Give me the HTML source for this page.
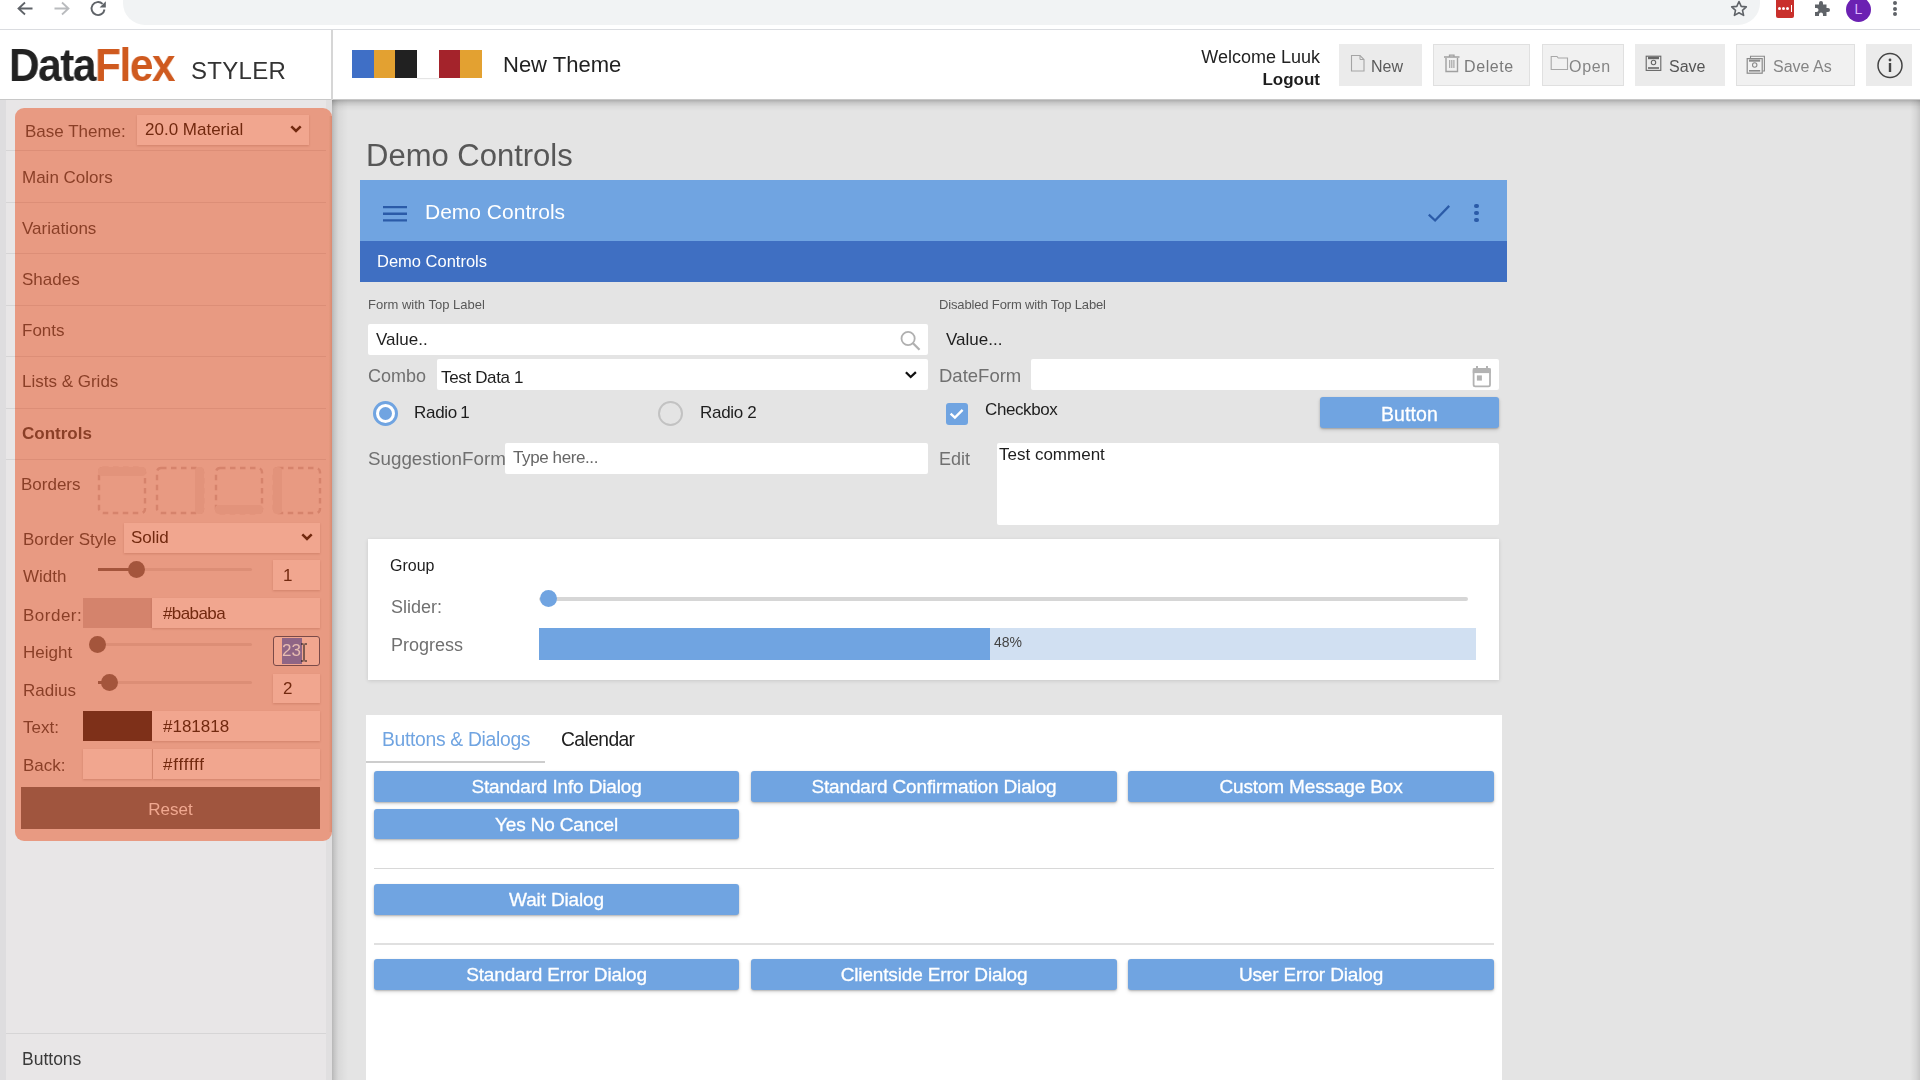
<!DOCTYPE html>
<html><head><meta charset="utf-8">
<style>
*{box-sizing:border-box;margin:0;padding:0}
html,body{width:1920px;height:1080px;overflow:hidden;background:#fff;font-family:"Liberation Sans",sans-serif;position:relative}
.t,.st,.sv,.lbl,.val,.ht,.bt{will-change:transform}
.a{position:absolute}
.t{position:absolute;white-space:nowrap;line-height:1}
#bb{left:0;top:0;width:1920px;height:30px;background:#fff;border-bottom:1px solid #dadce0;overflow:hidden}
#omni{left:123px;top:-20px;width:1637px;height:45px;background:#f1f3f4;border-radius:22px}
#hdr{left:0;top:30px;width:1920px;height:70px;background:#fff;border-bottom:1px solid #c8c8c8}
#hdiv{left:331px;top:30px;width:2px;height:70px;background:#d6d6d6}
#side{left:0;top:100px;width:332px;height:980px;background:#e8e6e7}
#main{left:332px;top:100px;width:1588px;height:980px;background:#e4e4e4}
.sep{position:absolute;left:6px;width:320px;height:1px;background:#d6d5d6}
.osep{position:absolute;left:15px;width:311px;height:1px;background:#dc8e77}
#ov{left:15px;top:108px;width:317px;height:733px;background:#e89a82;border-radius:9px}
.st{position:absolute;font-size:17px;color:#8a3f27;white-space:nowrap;line-height:1}
.sv{position:absolute;font-size:17px;color:#72290f;white-space:nowrap;line-height:1}
.inp{position:absolute;background:#f1a68f;box-shadow:0 1px 2px rgba(120,40,20,.2)}
.thumb{position:absolute;width:17px;height:17px;background:#a4553c;border-radius:50%}
.trk{position:absolute;left:98px;width:154px;height:3px;background:#dc8e76;border-radius:2px}
.btn{position:absolute;background:#70a4e1;border-radius:3px;box-shadow:0 1px 2px rgba(0,0,0,.22),0 2px 4px rgba(0,0,0,.12);height:31px}
.bt{position:absolute;left:0;right:0;top:6px;text-align:center;color:#fff;font-size:19px;line-height:1;letter-spacing:-0.15px;white-space:nowrap;-webkit-text-stroke:0.3px #fff}
.hb{position:absolute;top:44px;height:42px;background:#ebebeb}
.hb.o{background:#f1f1f1;border:1px solid #e0e0e0}
.ht{position:absolute;top:59px;font-size:16px;line-height:1;white-space:nowrap}
.lbl{position:absolute;white-space:nowrap;line-height:1;color:#707070}
.val{position:absolute;white-space:nowrap;line-height:1;color:#1e1e1e;font-size:17px}
.wb{position:absolute;background:#fff;border-radius:2px}
</style></head><body>
<div id="bb" class="a"><div id="omni" class="a"></div></div>
<div id="hdr" class="a"></div>
<div id="hdiv" class="a"></div>
<div id="side" class="a"></div>
<div id="main" class="a"></div>
<div class="a" style="left:332px;top:100px;width:16px;height:980px;background:linear-gradient(90deg,rgba(0,0,0,.2),rgba(0,0,0,.13) 15%,rgba(0,0,0,.05) 40%,rgba(0,0,0,0))"></div>
<div class="a" style="left:332px;top:100px;width:1588px;height:11px;background:linear-gradient(180deg,rgba(0,0,0,.24),rgba(0,0,0,.13) 25%,rgba(0,0,0,.04) 60%,rgba(0,0,0,0))"></div>
<div class="a" style="left:1910px;top:100px;width:10px;height:980px;background:linear-gradient(270deg,rgba(0,0,0,.13),rgba(0,0,0,.06) 40%,rgba(0,0,0,0))"></div>

<svg class="a" style="left:14px;top:0px" width="22" height="18" viewBox="0 0 22 18"><path d="M18.5 8.5H5.5M11 2.5L4.5 8.5L11 14.5" fill="none" stroke="#5f6368" stroke-width="1.8"/></svg>
<svg class="a" style="left:51px;top:0px" width="22" height="18" viewBox="0 0 22 18"><path d="M3.5 8.5H16.5M11 2.5L17.5 8.5L11 14.5" fill="none" stroke="#b9bbbe" stroke-width="1.8"/></svg>
<svg class="a" style="left:88px;top:0px" width="22" height="18" viewBox="0 0 22 18"><path d="M16.5 9.5A6.5 6.5 0 1 1 14.6 3.9" fill="none" stroke="#5f6368" stroke-width="1.9"/><path d="M17.8 1.2V7.4H11.6Z" fill="#5f6368"/></svg>
<svg class="a" style="left:1729px;top:0px" width="20" height="18" viewBox="0 0 20 18"><path d="M10 1.5L12.2 6.4L17.3 6.9L13.5 10.3L14.6 15.4L10 12.8L5.4 15.4L6.5 10.3L2.7 6.9L7.8 6.4Z" fill="none" stroke="#5f6368" stroke-width="1.6" stroke-linejoin="round"/></svg>
<div class="a" style="left:1776px;top:-3px;width:18px;height:21px;background:#c9302c;border-radius:2px"></div>
<div class="a" style="left:1778px;top:7px;width:3px;height:3px;background:#fff;border-radius:2px"></div>
<div class="a" style="left:1782px;top:7px;width:3px;height:3px;background:#fff;border-radius:2px"></div>
<div class="a" style="left:1786px;top:7px;width:3px;height:3px;background:#fff;border-radius:2px"></div>
<div class="a" style="left:1791px;top:5px;width:1px;height:7px;background:#fff"></div>
<svg class="a" style="left:1813px;top:0px" width="18" height="18" viewBox="0 0 18 18"><path d="M2 7V4.5H6V3A2 2 0 0 1 10 3V4.5H13.5V8H15A2 2 0 0 1 15 12H13.5V16H10V14.5A2 2 0 0 0 6 14.5V16H2V12H3.5A2 2 0 0 0 3.5 8H2Z" fill="#5f6368"/></svg>
<div class="a" style="left:1846px;top:-3px;width:25px;height:25px;background:#6b21b2;border-radius:50%;color:#dcb6ff;font-size:14px;line-height:25px;text-align:center">L</div>
<div class="a" style="left:1893px;top:1px;width:4px;height:4px;background:#5f6368;border-radius:50%"></div>
<div class="a" style="left:1893px;top:7px;width:4px;height:4px;background:#5f6368;border-radius:50%"></div>
<div class="a" style="left:1893px;top:12px;width:4px;height:4px;background:#5f6368;border-radius:50%"></div>

<div class="t" style="left:9px;top:42px;font-size:46px;font-weight:bold;color:#222;letter-spacing:-1.6px;transform:scaleX(0.922);transform-origin:0 0">Data<span style="color:#cf5a1f">Flex</span></div>
<div class="t" style="left:191px;top:59px;font-size:24px;color:#333;letter-spacing:0.3px">STYLER</div>
<div class="a" style="left:352px;top:50px;width:22px;height:28px;background:#3f6fc6"></div>
<div class="a" style="left:374px;top:50px;width:21px;height:28px;background:#e3a131"></div>
<div class="a" style="left:395px;top:50px;width:22px;height:28px;background:#212121"></div>
<div class="a" style="left:417px;top:50px;width:22px;height:28px;background:#fff;box-shadow:0 1px 1px rgba(0,0,0,.1)"></div>
<div class="a" style="left:439px;top:50px;width:21px;height:28px;background:#a4232b"></div>
<div class="a" style="left:460px;top:50px;width:22px;height:28px;background:#e3a131"></div>
<div class="t" style="left:503px;top:54px;font-size:22px;color:#222">New Theme</div>
<div class="t" style="left:1000px;top:48px;width:320px;text-align:right;font-size:18px;color:#222">Welcome Luuk</div>
<div class="t" style="left:1000px;top:71px;width:320px;text-align:right;font-size:17px;color:#1e1e1e;font-weight:bold">Logout</div>
<div class="hb" style="left:1339px;width:83px"></div>
<div class="hb o" style="left:1433px;width:97px"></div>
<div class="hb o" style="left:1542px;width:82px"></div>
<div class="hb" style="left:1635px;width:90px"></div>
<div class="hb o" style="left:1736px;width:119px"></div>
<div class="hb" style="left:1866px;width:46px"></div>
<svg class="a" style="left:1350px;top:54px" width="16" height="19" viewBox="0 0 16 19"><path d="M1.5 1.5H10L14 5.5V17H1.5Z" fill="none" stroke="#a5a5a5" stroke-width="1.1"/><path d="M10 1.5V5.5H14" fill="none" stroke="#a5a5a5" stroke-width="1"/></svg>
<div class="ht" style="left:1371px;color:#5a5a5a">New</div>
<svg class="a" style="left:1443px;top:54px" width="18" height="19" viewBox="0 0 18 19"><path d="M1 3H16.5M6.5 3V1.2H11V3" fill="none" stroke="#a0a0a0" stroke-width="1.3"/><path d="M3 4V17.5H14.5V4" fill="none" stroke="#a0a0a0" stroke-width="1.4"/><path d="M6.7 6V14M8.8 6V14M10.9 6V14" stroke="#a0a0a0" stroke-width="1.1"/></svg>
<div class="ht" style="left:1464px;color:#7a7a7a;letter-spacing:0.6px">Delete</div>
<svg class="a" style="left:1550px;top:55px" width="19" height="16" viewBox="0 0 19 16"><path d="M1.2 1.5H7L8.2 3H17.5V14.5H1.2Z" fill="none" stroke="#a8a8a8" stroke-width="1.1"/></svg>
<div class="ht" style="left:1569px;color:#858585;letter-spacing:0.7px">Open</div>
<svg class="a" style="left:1645px;top:55px" width="17" height="17" viewBox="0 0 17 17"><rect x="1.2" y="1.2" width="14.6" height="14.2" fill="none" stroke="#666" stroke-width="1.1"/><rect x="3" y="1.8" width="11" height="2.4" fill="#666"/><rect x="3" y="12.2" width="11" height="1.6" fill="#666"/><circle cx="8.5" cy="7.5" r="2.2" fill="none" stroke="#666" stroke-width="1.1"/></svg>
<div class="ht" style="left:1669px;color:#555">Save</div>
<svg class="a" style="left:1746px;top:55px" width="20" height="20" viewBox="0 0 20 20"><path d="M4.5 3V1.2H18.4V16H16.5" fill="none" stroke="#8a8a8a" stroke-width="1.1"/><rect x="1.2" y="3.6" width="15" height="14.6" fill="none" stroke="#8a8a8a" stroke-width="1.2"/><rect x="3" y="4.5" width="11.2" height="2.2" fill="#8a8a8a"/><rect x="3" y="15" width="11.2" height="1.6" fill="#8a8a8a"/><circle cx="8.7" cy="10" r="2.2" fill="none" stroke="#8a8a8a" stroke-width="1.1"/></svg>
<div class="ht" style="left:1773px;color:#858585">Save As</div>
<svg class="a" style="left:1876px;top:52px" width="28" height="28" viewBox="0 0 28 28"><circle cx="14" cy="13.5" r="12" fill="none" stroke="#444" stroke-width="1.5"/><rect x="12.8" y="11" width="2.4" height="9" fill="#444"/><circle cx="14" cy="8" r="1.4" fill="#444"/></svg>

<div class="t" style="left:366px;top:140px;font-size:31px;color:#575757">Demo Controls</div>
<div class="a" style="left:360px;top:180px;width:1147px;height:61px;background:#70a4e1"></div>
<div class="a" style="left:360px;top:241px;width:1147px;height:41px;background:#3f6fc2"></div>
<svg class="a" style="left:383px;top:204px" width="24" height="20" viewBox="0 0 24 20"><path d="M0 3.1H24M0 9.7H24M0 16.4H24" stroke="#2b5ba8" stroke-width="2.4"/></svg>
<div class="t" style="left:425px;top:201px;font-size:21px;color:#fff">Demo Controls</div>
<svg class="a" style="left:1420px;top:195px" width="40" height="35" viewBox="0 0 40 35"><path d="M8.8 19.7L15.1 25.5L29.2 10.9" fill="none" stroke="#2b5ba8" stroke-width="2.3"/></svg>
<div class="a" style="left:1474.3px;top:203.9px;width:4.4px;height:4.4px;background:#2b5ba8;border-radius:50%"></div>
<div class="a" style="left:1474.3px;top:210.8px;width:4.4px;height:4.4px;background:#2b5ba8;border-radius:50%"></div>
<div class="a" style="left:1474.3px;top:217.8px;width:4.4px;height:4.4px;background:#2b5ba8;border-radius:50%"></div>
<div class="t" style="left:377px;top:253px;font-size:16.5px;color:#fff">Demo Controls</div>

<div class="lbl" style="left:368px;top:298px;font-size:13px;color:#585858">Form with Top Label</div>
<div class="wb" style="left:368px;top:324px;width:560px;height:31px"></div>
<div class="val" style="left:376px;top:331px">Value..</div>
<svg class="a" style="left:898px;top:328px" width="26" height="26" viewBox="0 0 26 26"><circle cx="10.1" cy="10.5" r="6.6" fill="none" stroke="#b0b0b0" stroke-width="1.8"/><path d="M15 15.3L21.5 21.7" stroke="#b0b0b0" stroke-width="2.3"/></svg>
<div class="lbl" style="left:368px;top:367px;font-size:18px">Combo</div>
<div class="wb" style="left:437px;top:359px;width:491px;height:31px"></div>
<div class="val" style="left:441px;top:369px;letter-spacing:-0.35px">Test Data 1</div>
<svg class="a" style="left:900px;top:366px" width="22" height="16" viewBox="0 0 22 16"><path d="M5.9 6.2L10.7 11L15.9 6.2" fill="none" stroke="#111" stroke-width="2.3"/></svg>
<div class="a" style="left:372.5px;top:400.5px;width:25px;height:25px;border:3.7px solid #70a4e1;border-radius:50%;background:#fff"></div>
<div class="a" style="left:378.5px;top:406.5px;width:13px;height:13px;background:#70a4e1;border-radius:50%"></div>
<div class="val" style="left:414px;top:404px;letter-spacing:-0.3px">Radio <span style="margin-left:-1px;letter-spacing:0">1</span></div>
<div class="a" style="left:658px;top:400.5px;width:25px;height:25px;border:2px solid #c2c2c2;border-radius:50%"></div>
<div class="val" style="left:700px;top:404px;letter-spacing:-0.3px">Radio 2</div>
<div class="lbl" style="left:368px;top:450px;font-size:18.8px">SuggestionForm</div>
<div class="wb" style="left:505px;top:443px;width:423px;height:31px"></div>
<div class="val" style="left:513px;top:449px;color:#666;letter-spacing:-0.4px">Type here...</div>

<div class="lbl" style="left:939px;top:298px;font-size:13px;color:#585858;letter-spacing:-0.15px">Disabled Form with Top Label</div>
<div class="val" style="left:946px;top:331px">Value...</div>
<div class="lbl" style="left:939px;top:367px;font-size:18.5px">DateForm</div>
<div class="wb" style="left:1031px;top:359px;width:468px;height:31px"></div>
<svg class="a" style="left:1470px;top:364px" width="24" height="26" viewBox="0 0 24 26"><rect x="3.6" y="4.8" width="16.4" height="17.6" rx="1.6" fill="none" stroke="#b3b3b3" stroke-width="1.8"/><rect x="2.8" y="4.3" width="18" height="4.8" fill="#b3b3b3"/><path d="M7 2V5M17 2V5" stroke="#b3b3b3" stroke-width="2"/><rect x="6.9" y="11.4" width="5" height="5.2" fill="#b3b3b3"/></svg>
<div class="a" style="left:946px;top:403px;width:22px;height:22px;background:#70a4e1;border-radius:3px"></div>
<svg class="a" style="left:946px;top:403px" width="22" height="22" viewBox="0 0 22 22"><path d="M4.6 10.7L8.9 14.6L16.6 6.9" fill="none" stroke="#fff" stroke-width="2.4"/></svg>
<div class="val" style="left:985px;top:401px;letter-spacing:-0.4px">Checkbox</div>
<div class="btn" style="left:1320px;top:397px;width:179px"><div class="bt" style="top:8px;font-size:19.5px;letter-spacing:0.1px">Button</div></div>
<div class="lbl" style="left:939px;top:450px;font-size:18px">Edit</div>
<div class="wb" style="left:997px;top:443px;width:502px;height:82px"></div>
<div class="val" style="left:999px;top:446px">Test comment</div>

<div class="a" style="left:368px;top:539px;width:1131px;height:141px;background:#fff;box-shadow:0 1px 4px rgba(0,0,0,.12)"></div>
<div class="t" style="left:390px;top:558px;font-size:16px;color:#1e1e1e">Group</div>
<div class="lbl" style="left:391px;top:597.5px;font-size:18px">Slider:</div>
<div class="a" style="left:539px;top:597px;width:929px;height:4px;background:#d6d6d6;border-radius:2px"></div>
<div class="a" style="left:539.5px;top:590.3px;width:17px;height:17px;background:#70a4e1;border-radius:50%"></div>
<div class="lbl" style="left:391px;top:636px;font-size:18px">Progress</div>
<div class="a" style="left:539px;top:628px;width:937px;height:31.5px;background:#d1e0f2"></div>
<div class="a" style="left:539px;top:628px;width:451px;height:31.5px;background:#70a4e1"></div>
<div class="t" style="left:994px;top:635px;font-size:14px;color:#444">48%</div>

<div class="a" style="left:366px;top:715px;width:1136px;height:400px;background:#fff"></div>
<div class="t" style="left:382px;top:729.5px;font-size:19.3px;color:#70a4e1;letter-spacing:-0.3px">Buttons &amp; Dialogs</div>
<div class="t" style="left:561px;top:729.5px;font-size:19.3px;color:#1e1e1e;letter-spacing:-0.6px">Calendar</div>
<div class="a" style="left:366px;top:761px;width:179px;height:2px;background:#cdcdcd"></div>
<div class="btn" style="left:374px;top:771px;width:365px"><div class="bt">Standard Info Dialog</div></div>
<div class="btn" style="left:751px;top:771px;width:366px"><div class="bt">Standard Confirmation Dialog</div></div>
<div class="btn" style="left:1128px;top:771px;width:366px"><div class="bt">Custom Message Box</div></div>
<div class="btn" style="left:374px;top:809px;width:365px;height:30px"><div class="bt">Yes No Cancel</div></div>
<div class="a" style="left:374px;top:868px;width:1120px;height:1px;background:#d8d8d8"></div>
<div class="btn" style="left:374px;top:884px;width:365px"><div class="bt">Wait Dialog</div></div>
<div class="a" style="left:374px;top:943px;width:1120px;height:2px;background:#e0e0e0"></div>
<div class="btn" style="left:374px;top:959px;width:365px"><div class="bt">Standard Error Dialog</div></div>
<div class="btn" style="left:751px;top:959px;width:366px"><div class="bt">Clientside Error Dialog</div></div>
<div class="btn" style="left:1128px;top:959px;width:366px"><div class="bt">User Error Dialog</div></div>

<div class="a" style="left:0;top:100px;width:6px;height:980px;background:#dedddf"></div>
<div class="a" style="left:326px;top:100px;width:6px;height:980px;background:#e0dfe0"></div>
<div class="sep" style="top:150px"></div>
<div class="sep" style="top:202px"></div>
<div class="sep" style="top:253px"></div>
<div class="sep" style="top:305px"></div>
<div class="sep" style="top:356px"></div>
<div class="sep" style="top:408px"></div>
<div class="sep" style="top:459px"></div>
<div class="sep" style="top:1033px"></div>
<div class="t" style="left:22px;top:1051px;font-size:17.5px;color:#3a3a3a">Buttons</div>
<div id="ov" class="a"></div>
<div class="a" style="left:329px;top:116px;width:3px;height:716px;background:linear-gradient(90deg,#e59a80,#da8a72)"></div>
<div class="osep" style="top:150px"></div>
<div class="osep" style="top:202px"></div>
<div class="osep" style="top:253px"></div>
<div class="osep" style="top:305px"></div>
<div class="osep" style="top:356px"></div>
<div class="osep" style="top:408px"></div>
<div class="osep" style="top:459px"></div>
<div class="st" style="left:25px;top:123px">Base Theme:</div>
<div class="inp" style="left:137px;top:115px;width:172px;height:30px"></div>
<div class="sv" style="left:145px;top:121px">20.0 Material</div>
<svg class="a" style="left:289px;top:124px" width="14" height="10" viewBox="0 0 14 10"><path d="M2.3 2.3L7 7L11.7 2.3" fill="none" stroke="#72290f" stroke-width="2.5"/></svg>
<div class="st" style="left:22px;top:169px">Main Colors</div>
<div class="st" style="left:22px;top:220px">Variations</div>
<div class="st" style="left:22px;top:271px">Shades</div>
<div class="st" style="left:22px;top:322px">Fonts</div>
<div class="st" style="left:22px;top:373px">Lists &amp; Grids</div>
<div class="st" style="left:22px;top:425px;font-weight:bold">Controls</div>
<div class="st" style="left:21px;top:476px">Borders</div>
<svg class="a" style="left:96px;top:465px" width="228" height="50" viewBox="0 0 228 50">
<g fill="none" stroke="#d6836c" stroke-width="2.4" stroke-dasharray="5.5 4.5">
<rect x="3" y="3" width="46" height="45" rx="4"/>
<rect x="61" y="3" width="46" height="45" rx="4"/>
<rect x="120" y="3" width="46" height="45" rx="4"/>
<rect x="178" y="3" width="46" height="45" rx="4"/>
</g>
<g fill="#e2937b">
<rect x="2" y="2" width="48" height="9" rx="4"/>
<rect x="99" y="2" width="9" height="47" rx="4"/>
<rect x="119" y="40" width="48" height="9" rx="4"/>
<rect x="177" y="2" width="9" height="47" rx="4"/>
</g>
</svg>
<div class="st" style="left:23px;top:531px">Border Style</div>
<div class="inp" style="left:124px;top:523px;width:196px;height:30px"></div>
<div class="sv" style="left:131px;top:529px">Solid</div>
<svg class="a" style="left:300px;top:532px" width="14" height="10" viewBox="0 0 14 10"><path d="M2.3 2.3L7 7L11.7 2.3" fill="none" stroke="#72290f" stroke-width="2.5"/></svg>
<div class="st" style="left:23px;top:568px">Width</div>
<div class="trk" style="top:567.5px"></div>
<div class="a" style="left:98px;top:567.5px;width:39px;height:3.5px;background:#a4553c"></div>
<div class="thumb" style="left:128.3px;top:560.7px"></div>
<div class="inp" style="left:273px;top:560px;width:47px;height:30px"></div>
<div class="sv" style="left:283px;top:567px">1</div>
<div class="st" style="left:23px;top:607px;letter-spacing:0.5px">Border:</div>
<div class="a" style="left:83px;top:598px;width:69px;height:30px;background:#d4836c"></div>
<div class="inp" style="left:152px;top:598px;width:168px;height:30px"></div>
<div class="sv" style="left:163px;top:604.5px;letter-spacing:-0.6px">#bababa</div>
<div class="st" style="left:23px;top:644px">Height</div>
<div class="trk" style="top:643px"></div>
<div class="thumb" style="left:89.2px;top:636px"></div>
<div class="a" style="left:273px;top:636px;width:47px;height:30px;background:#f1a68f;border:1.5px solid #7a4a48;border-radius:3px"></div>
<div class="a" style="left:282px;top:638px;width:20px;height:26px;background:#8f6585"></div>
<div class="t" style="left:282px;top:641.5px;font-size:17px;color:#e6bcb0">23</div>
<svg class="a" style="left:299px;top:643px" width="10" height="20" viewBox="0 0 10 20"><path d="M2 1H4.5M5.5 1H8M5 1.5V17.5M2 18H4.5M5.5 18H8" fill="none" stroke="#111" stroke-width="1"/></svg>
<div class="st" style="left:23px;top:682px">Radius</div>
<div class="trk" style="top:681px"></div>
<div class="a" style="left:98px;top:681px;width:10px;height:3px;background:#a4553c"></div>
<div class="thumb" style="left:100.8px;top:674px"></div>
<div class="inp" style="left:273px;top:674px;width:47px;height:29px"></div>
<div class="sv" style="left:283px;top:680px">2</div>
<div class="st" style="left:23px;top:719px">Text:</div>
<div class="a" style="left:83px;top:711px;width:69px;height:30px;background:#7e3019"></div>
<div class="inp" style="left:152px;top:711px;width:168px;height:30px"></div>
<div class="sv" style="left:163px;top:718px">#181818</div>
<div class="st" style="left:23px;top:756.5px">Back:</div>
<div class="inp" style="left:83px;top:749px;width:69px;height:30px"></div>
<div class="a" style="left:152px;top:749px;width:1px;height:30px;background:#dc8e76"></div>
<div class="inp" style="left:153px;top:749px;width:167px;height:30px"></div>
<div class="sv" style="left:163px;top:756px;letter-spacing:0.8px">#ffffff</div>
<div class="a" style="left:21px;top:787px;width:299px;height:42px;background:#a0553e"></div>
<div class="t" style="left:21px;top:801px;width:299px;text-align:center;font-size:17px;color:#f0a890">Reset</div>

</body></html>
